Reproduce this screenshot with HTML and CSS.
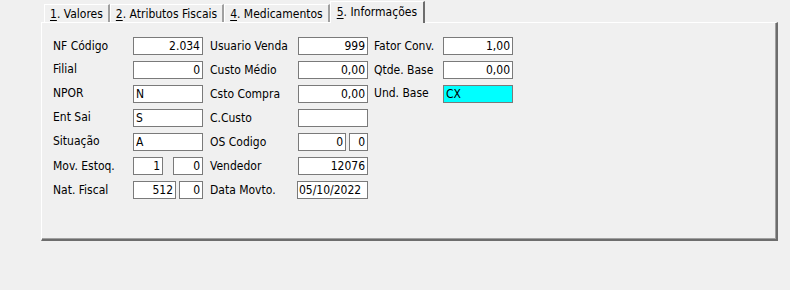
FILE: index.html
```html
<!doctype html>
<html>
<head>
    <meta charset="UTF-8">
    <title>Informações</title>
    <link rel="stylesheet" href="styles.css">
</head>
<body>
<div class="tabs">
    <div class="tab"><u>1</u>. Valores</div>
    <div class="tab"><u>2</u>. Atributos Fiscais</div>
    <div class="tab"><u>4</u>. Medicamentos</div>
    <div class="tab active"><u>5</u>. Informações</div>
</div>
<div class="panel">
    <div class="form">
        <!-- linha 1 -->
        <div class="label">NF Código</div>
        <div class="cell"><input class="field num" value="2.034"></div>
        <div class="label">Usuario Venda</div>
        <div class="cell"><input class="field num" value="999"></div>
        <div class="label">Fator Conv.</div>
        <div class="cell"><input class="field num" value="1,00"></div>

        <!-- linha 2 -->
        <div class="label up">Filial</div>
        <div class="cell"><input class="field num" value="0"></div>
        <div class="label">Custo Médio</div>
        <div class="cell"><input class="field num" value="0,00"></div>
        <div class="label">Qtde. Base</div>
        <div class="cell"><input class="field num" value="0,00"></div>

        <!-- linha 3 -->
        <div class="label up">NPOR</div>
        <div class="cell"><input class="field" value="N"></div>
        <div class="label">Csto Compra</div>
        <div class="cell"><input class="field num" value="0,00"></div>
        <div class="label up">Und. Base</div>
        <div class="cell"><input class="field cyan" value="CX"></div>

        <!-- linha 4 -->
        <div class="label up">Ent Sai</div>
        <div class="cell"><input class="field" value="S"></div>
        <div class="label">C.Custo</div>
        <div class="cell"><input class="field" value=""></div>
        <div></div>
        <div></div>

        <!-- linha 5 -->
        <div class="label up">Situação</div>
        <div class="cell"><input class="field" value="A"></div>
        <div class="label">OS Codigo</div>
        <div class="cell split">
            <input class="field num w48" value="0">
            <input class="field num w19" value="0">
        </div>
        <div></div>
        <div></div>

        <!-- linha 6 -->
        <div class="label">Mov. Estoq.</div>
        <div class="cell split">
            <input class="field num w30" value="1">
            <input class="field num w30" value="0">
        </div>
        <div class="label">Vendedor</div>
        <div class="cell"><input class="field num" value="12076"></div>
        <div></div>
        <div></div>

        <!-- linha 7 -->
        <div class="label">Nat. Fiscal</div>
        <div class="cell split">
            <input class="field num w43" value="512">
            <input class="field num w24" value="0">
        </div>
        <div class="label">Data Movto.</div>
        <div class="cell"><input class="field date" value="05/10/2022"></div>
        <div></div>
        <div></div>
    </div>
</div>
</body>
</html>
```

FILE: styles.css
```css
body {
    margin: 0;
    background: #f0f0f0;
    font-family: "DejaVu Sans Condensed", "DejaVu Sans", sans-serif;
    font-size: 11px;
    color: #000;
}

.tabs {
    display: flex;
    align-items: flex-end;
    margin-left: 44px;
    padding-top: 2px;
    height: 22px;
    box-sizing: border-box;
}

.tab {
    height: 18px;
    line-height: 18px;
    padding: 0 5px 0 5px;
    border-left: 1px solid #fff;
    border-top: 1px solid #fff;
    border-right: 2px solid #a0a0a0;
    box-sizing: border-box;
    font-size: 12px;
    white-space: nowrap;
}

.tab.active {
    height: 22px;
    line-height: 20px;
    padding: 0 6px 0 6px;
    margin-bottom: -1px;
    background: #f0f0f0;
    border-right: 2px solid #6d6d6d;
    position: relative;
}

.tab u {
    text-decoration: underline;
    text-underline-offset: 2px;
}

.panel {
    margin-left: 41px;
    width: 737px;
    height: 219px;
    box-sizing: border-box;
    border-top: 1px solid #fff;
    border-left: 1px solid #fff;
    border-right: 2px solid #6d6d6d;
    border-bottom: 2px solid #6d6d6d;
    box-shadow: inset -1px -1px 0 #a0a0a0;
    padding: 11px 0 0 11px;
}

.form {
    display: grid;
    grid-template-columns: 80px 77px 88px 76px 69px 70px;
    grid-auto-rows: 24px;
}

.label {
    display: flex;
    align-items: center;
    font-size: 12px;
    white-space: nowrap;
}

.label.up {
    padding-bottom: 3px;
}

.cell {
    display: flex;
    align-items: center;
}

.split {
    gap: 3px;
}

.field {
    width: 70px;
    height: 18px;
    box-sizing: border-box;
    border: 1px solid #7a7a7a;
    background: #fff;
    font-family: "DejaVu Sans Condensed", "DejaVu Sans", sans-serif;
    font-size: 12px;
    padding: 0 2px;
    margin: 0;
    outline: none;
    color: #000;
}

.num {
    text-align: right;
}

.cyan {
    background: #00ffff;
}

.date {
    width: 71px;
    margin-left: -1px;
    padding: 0 1px;
}

.w30 { width: 30px; }
.split .w30 + .w30 { margin-left: 7px; }
.w43 { width: 43px; }
.w24 { width: 24px; }
.w48 { width: 48px; }
.w19 { width: 19px; }
```
